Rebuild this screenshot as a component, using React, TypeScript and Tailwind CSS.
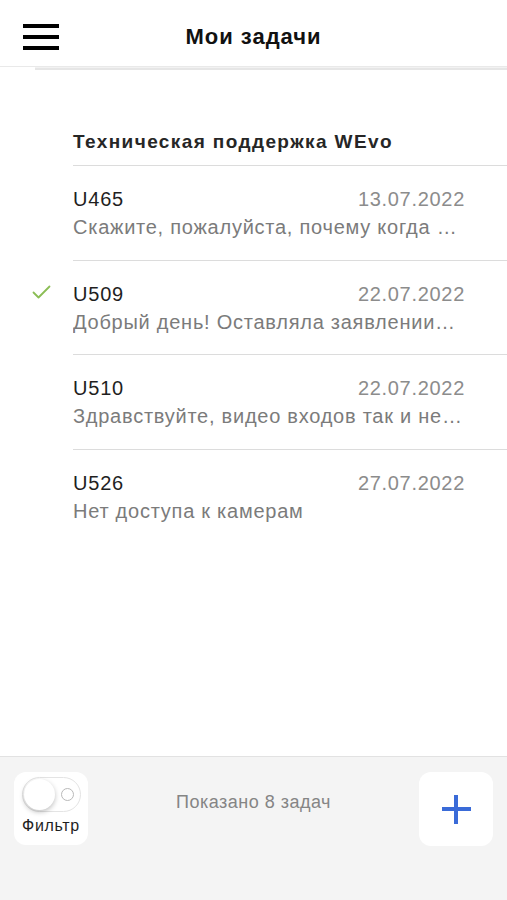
import React from "react";

const items = [
  { id: "U465", date: "13.07.2022", text: "Скажите, пожалуйста, почему когда …", check: false, h: "h-[95px]" },
  { id: "U509", date: "22.07.2022", text: "Добрый день! Оставляла заявлении…", check: true, h: "h-[94px]" },
  { id: "U510", date: "22.07.2022", text: "Здравствуйте, видео входов так и не…", check: false, h: "h-[95px]" },
  { id: "U526", date: "27.07.2022", text: "Нет доступа к камерам", check: false, h: "h-[95px]" },
];

export default function App() {
  return (
    <div
      className="h-[900px] w-full flex flex-col bg-white overflow-hidden"
      style={{ fontFamily: '"Liberation Sans", Arial, sans-serif' }}
    >
      {/* Header */}
      <div className="h-[66px] shrink-0 grid grid-cols-[1fr_auto_1fr] items-center pt-[8px]">
        <div className="pl-[23px] flex flex-col gap-[7px]">
          <div className="w-[36px] h-[4px] bg-black" />
          <div className="w-[36px] h-[4px] bg-black" />
          <div className="w-[36px] h-[4px] bg-black" />
        </div>
        <div className="text-[22px] font-bold text-[#111] leading-none tracking-[1px]">Мои задачи</div>
        <div />
      </div>
      <div className="h-[1px] bg-[#e9e9e9] shrink-0" />
      <div className="h-[3px] shrink-0 flex">
        <div className="w-[35px]" />
        <div className="flex-1 flex flex-col">
          <div className="h-[1px] bg-[#f2f2f2]" />
          <div className="h-[2px] bg-[#e6e6e6]" />
        </div>
      </div>

      {/* Content */}
      <div className="flex-1 flex flex-col">
        <div className="pt-[61px] pl-[73px]">
          <div className="border-b border-[#dcdcdc] pb-[12px]">
            <div className="text-[19px] font-bold text-[#262626] leading-[22px] tracking-[1.4px]">
              Техническая поддержка WEvo
            </div>
          </div>
        </div>
        {items.map((it, i) => (
          <div key={it.id} className="flex">
            <div className="w-[73px] shrink-0 pl-[32px] pt-[24px]">
              {it.check && (
                <svg width="19" height="14" viewBox="0 0 19 14" fill="none">
                  <path d="M1.5 7.5 L6.5 12.5 L17.5 1.5" stroke="#8bbd55" strokeWidth="1.8" strokeLinecap="round" strokeLinejoin="round" />
                </svg>
              )}
            </div>
            <div
              className={
                "flex-1 pt-[21px] pr-[42px] " +
                it.h +
                " " +
                (i < items.length - 1 ? "border-b border-[#dcdcdc]" : "")
              }
            >
              <div className="flex items-center justify-between leading-[24px]">
                <span className="text-[20px] text-[#1f1f1f] tracking-[0.8px]">{it.id}</span>
                <span className="text-[20px] text-[#8c8c8c] tracking-[0.7px]">{it.date}</span>
              </div>
              <div className="mt-[4px] text-[20px] leading-[24px] text-[#7b7b7b] whitespace-nowrap overflow-hidden tracking-[0.75px]">
                {it.text}
              </div>
            </div>
          </div>
        ))}
      </div>

      {/* Footer */}
      <div className="h-[144px] shrink-0 bg-[#f4f4f4] border-t border-[#e2e2e2] px-[14px] pt-[15px] flex items-start">
        <div className="w-[74px] h-[73px] bg-white rounded-[12px] flex flex-col items-center pt-[5px]">
          <div className="relative w-[59px] h-[35px] rounded-full border border-[#e4e4e4] bg-white">
            <div className="absolute left-[1px] top-[1px] w-[31px] h-[31px] rounded-full bg-white shadow-[0_2px_5px_rgba(0,0,0,0.25)]" />
            <div className="absolute right-[6px] top-[10px] w-[13px] h-[13px] rounded-full border border-[#b9b9b9]" />
          </div>
          <div className="mt-[4px] text-[16px] leading-[19px] text-[#1f1f1f] tracking-[0.7px]">Фильтр</div>
        </div>
        <div className="flex-1 text-center pt-[19px] text-[18px] leading-[22px] text-[#858585] tracking-[0.5px]">
          Показано 8 задач
        </div>
        <div className="w-[74px] h-[74px] bg-white rounded-[12px] flex items-center justify-center">
          <div className="relative w-[29px] h-[29px]">
            <div className="absolute left-0 top-[12.5px] w-[29px] h-[4px] bg-[#3a6bd8]" />
            <div className="absolute top-0 left-[12.5px] w-[4px] h-[29px] bg-[#3a6bd8]" />
          </div>
        </div>
      </div>
    </div>
  );
}
